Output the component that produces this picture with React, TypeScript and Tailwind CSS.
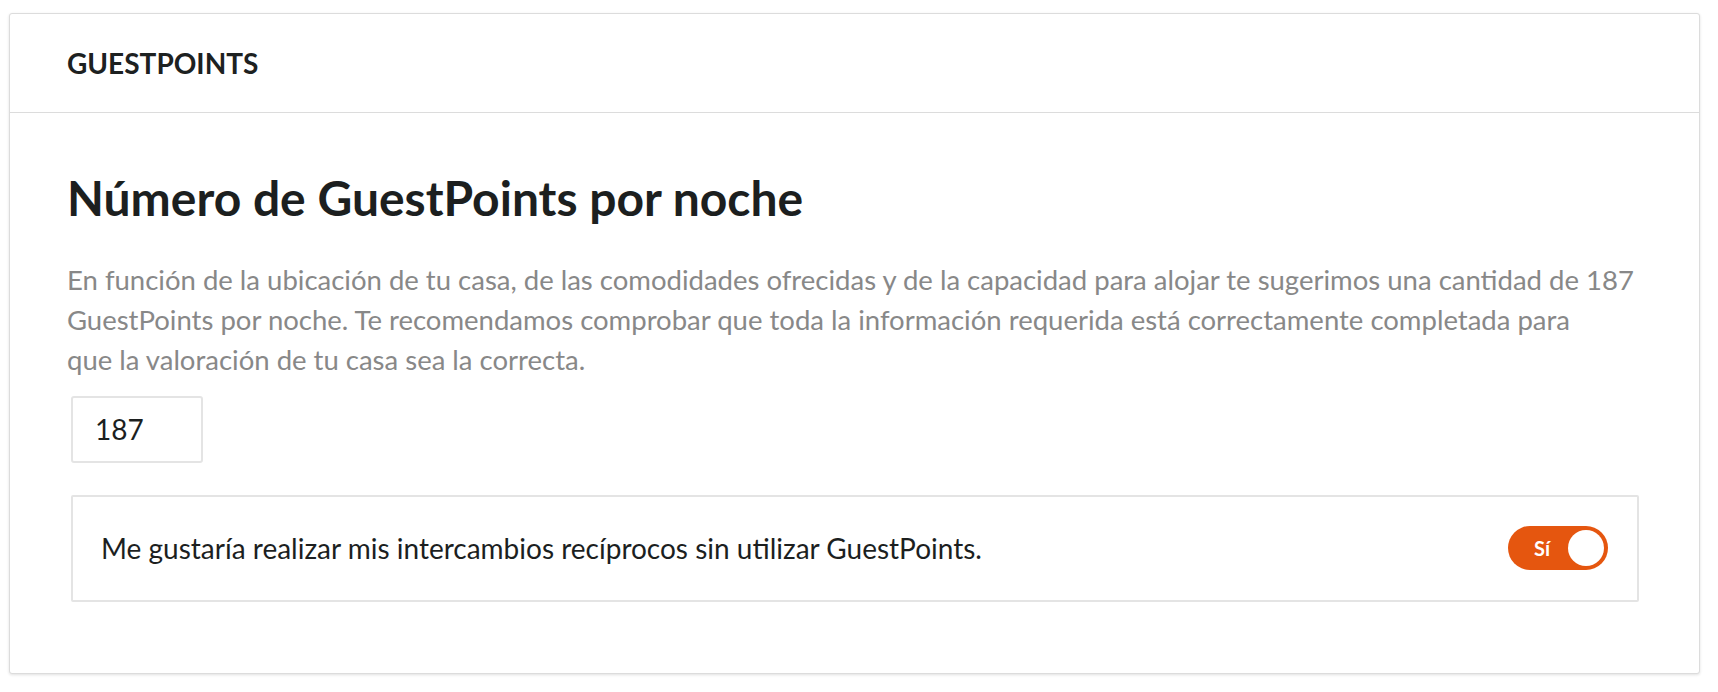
import { useState } from "react";

const LATO = { fontFamily: "Lato, 'Open Sans', sans-serif" };

function Toggle({ on, onChange }: { on: boolean; onChange: (v: boolean) => void }) {
  return (
    <button
      type="button"
      onClick={() => onChange(!on)}
      className={
        on
          ? "flex h-[44px] w-[100px] shrink-0 items-center justify-between rounded-full bg-[#e5560f] pl-[26px] pr-[4px]"
          : "flex h-[44px] w-[100px] shrink-0 items-center justify-between rounded-full bg-[#cfcfcf] pl-[4px] pr-[22px]"
      }
    >
      {on ? (
        <>
          <span className="text-[20px] font-bold leading-none text-white">Sí</span>
          <span className="h-[36px] w-[36px] rounded-full bg-white" />
        </>
      ) : (
        <>
          <span className="h-[36px] w-[36px] rounded-full bg-white" />
          <span className="text-[20px] font-bold leading-none text-white">No</span>
        </>
      )}
    </button>
  );
}

export default function App() {
  const [points, setPoints] = useState("187");
  const [noPoints, setNoPoints] = useState(true);

  return (
    <div className="min-h-screen bg-white pl-[9px] pt-[13px]" style={LATO}>
      <section className="w-[1691px] rounded-[3px] border border-[#dcdcdc] bg-white shadow-[0_1px_3px_rgba(0,0,0,0.12)]">
        <header className="flex h-[99px] items-center border-b border-[#dcdcdc] px-[57px]">
          <h2 className="text-[28px] font-bold leading-none text-[#1d2121]">GUESTPOINTS</h2>
        </header>

        <div className="px-[57px] pb-[71px] pt-[56px]">
          <h1 className="text-[48px] font-bold leading-[1.2] text-[#1c1f1f]">
            Número de GuestPoints por noche
          </h1>

          <p className="mt-[33px] text-[27.5px] leading-[40px] text-[#888888]">
            En función de la ubicación de tu casa, de las comodidades ofrecidas y de la capacidad
            para alojar te sugerimos una cantidad de 187 GuestPoints por noche. Te recomendamos
            comprobar que toda la información requerida está correctamente completada para
            <br />
            que la valoración de tu casa sea la correcta.
          </p>

          <div className="pl-[4px]">
            <input
              value={points}
              onChange={(e) => setPoints(e.target.value)}
              className="mt-[16px] block h-[67px] w-[132px] rounded-[3px] border-2 border-[#e4e4e4] px-[22px] text-[28px] text-[#1c1f1f] outline-none"
            />

            <div className="mt-[32px] flex h-[107px] w-[1568px] items-center justify-between rounded-[2px] border-2 border-[#e4e4e4] pl-[28px] pr-[29px]">
              <span className="text-[28px] text-[#1c1f1f]">
                Me gustaría realizar mis intercambios recíprocos sin utilizar GuestPoints.
              </span>
              <Toggle on={noPoints} onChange={setNoPoints} />
            </div>
          </div>
        </div>
      </section>
    </div>
  );
}
